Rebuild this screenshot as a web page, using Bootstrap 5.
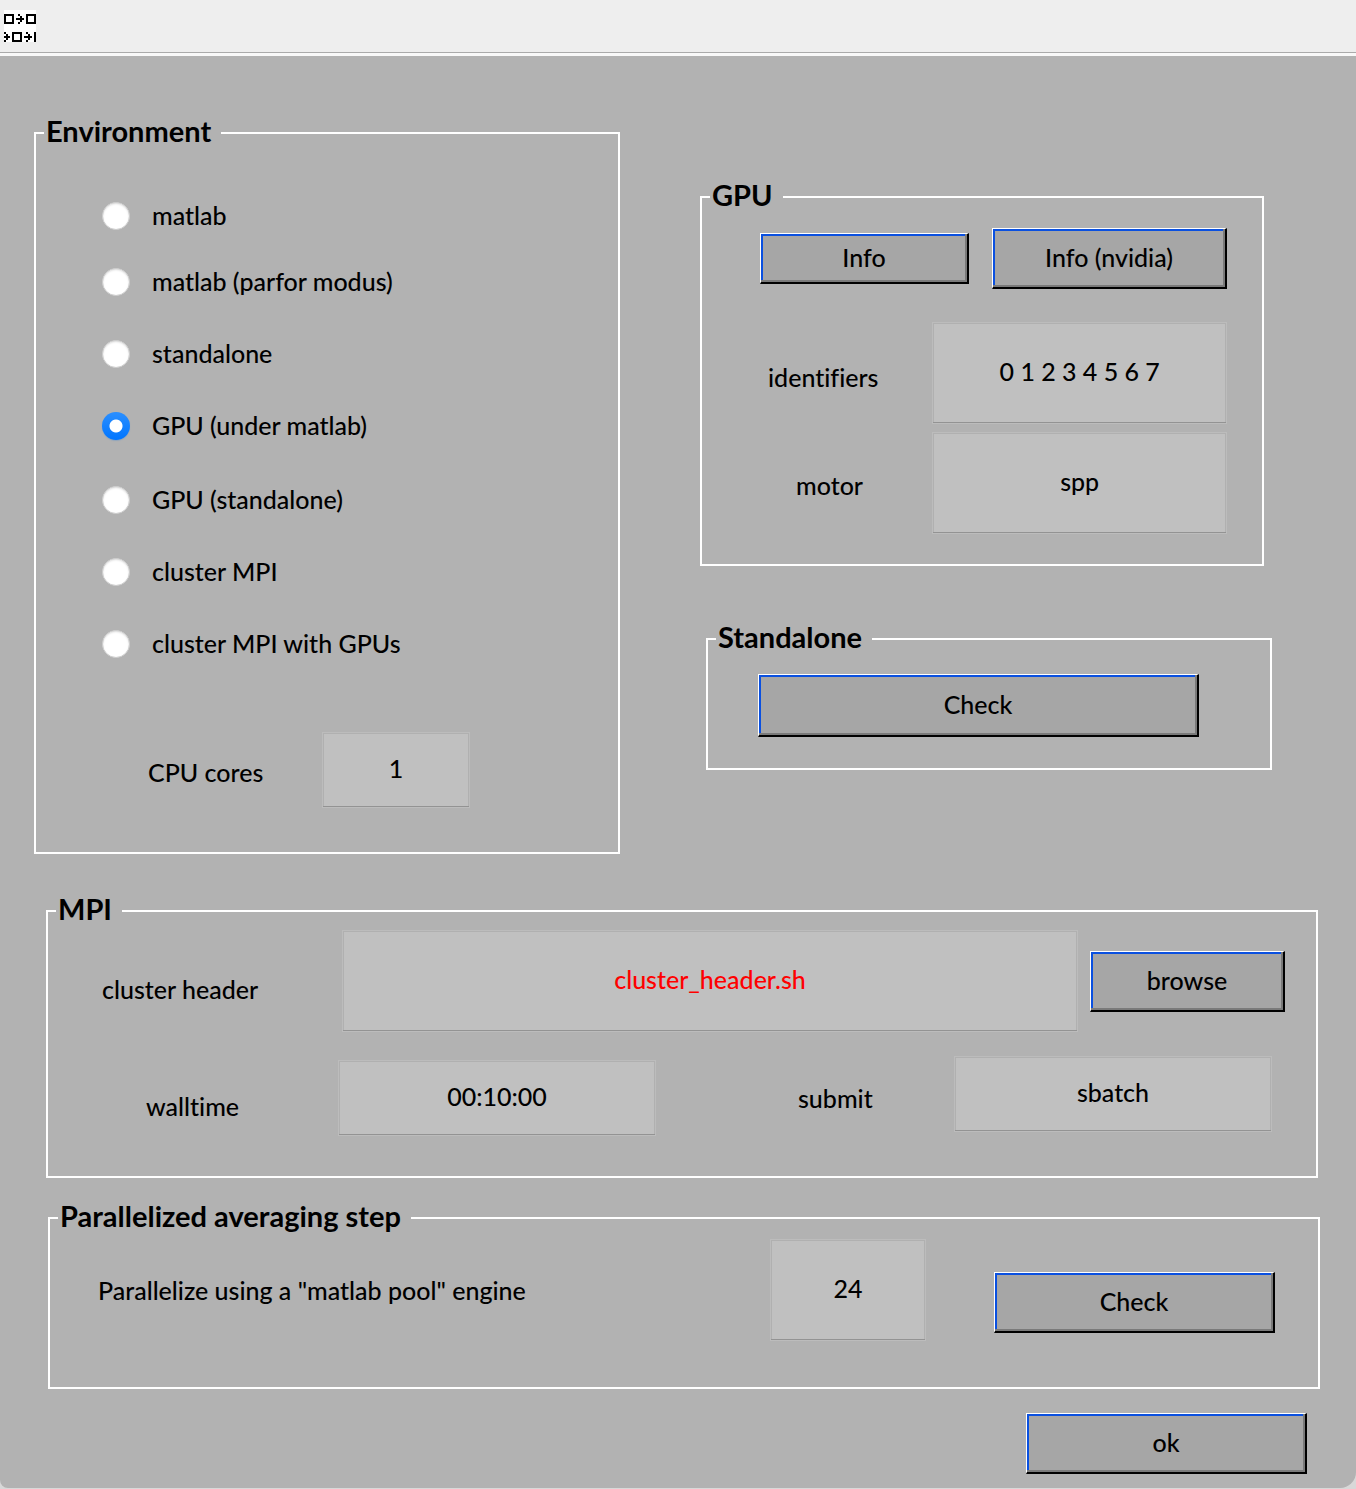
<!DOCTYPE html>
<html lang="en">
<head>
<meta charset="utf-8">
<meta name="viewport" content="width=device-width, initial-scale=1">
<title>Computing environment</title>
<link href="https://cdn.jsdelivr.net/npm/bootstrap@5.3.0/dist/css/bootstrap.min.css" rel="stylesheet">
<style>
body{background:#d8d8d8;color:#000;font-family:Lato,"Open Sans",sans-serif;font-size:25px;font-weight:500;line-height:36px;font-variant-ligatures:none}
input,button{font-weight:500;font-variant-ligatures:none}
.tool-strip{background:#eee;height:56px;padding:10px 4px 0;border-bottom:3px solid #f8f8f8;box-shadow:inset 0 -1px 0 #aaa}
.tool-strip svg{display:block}
.tool-strip a{display:inline-block}
.panel-body{background:#b2b2b2;border-radius:0 0 16px 8px;padding:59px 36px 14px 34px}
fieldset{border:2px solid #fff}
legend{float:none;width:auto;margin:0 0 0 8px;padding:0 10px 4px 2px;font-size:29px;line-height:32px;font-weight:700}
.top-grid{display:grid;grid-template-columns:586fr 572fr;column-gap:80px;padding-right:48px}
.env-inner{padding:35px 66px 44px}
.env-row{display:flex;align-items:center;height:72px;gap:22px}
.env-local .env-row:first-child{height:60px}
.env-remote{margin-top:2px}
.env-row label{padding-bottom:2px}
.env-radio{appearance:none;width:28px;height:28px;border-radius:50%;background:#fff;border:1px solid #ccc;margin:0;flex:none;box-shadow:inset 0 1px 2px #ddd}
.env-radio:checked{border:0;background:radial-gradient(circle,#fff 6px,transparent 7px),linear-gradient(#2b8fff,#0075ff);box-shadow:0 1px 1px #8fa5bd}
.entry{appearance:none;display:block;width:100%;min-width:0;height:102px;padding:0 2px 4px;border:1px solid #bcbcbc;border-radius:0;background:#c0c0c0;color:#000;text-align:center;box-shadow:inset 0 -1px 0 #939393,inset 0 0 0 1px #b0b0b0;outline:0}
.entry-short{height:76px}
.entry-alert{color:#f00}
.push{display:block;width:100%;height:61px;padding:0 0 2px;border:solid;border-width:1px 2px 2px 1px;border-color:#fff #000 #000 #fff;border-radius:0;background:#a6a6a6;color:#000;text-align:center;box-shadow:inset -2px -2px 0 #7a7a7a,inset 2px 2px 0 #0a50e0}
.push-small{height:51px}
.push-tall{height:63px}
.cores-grid{display:grid;grid-template-columns:174fr 148fr 82fr;padding-left:46px;margin-top:52px}
.right-col{padding-top:64px}
.gpu-box{margin-right:8px}
.gpu-inner{padding:13px 35px 30px 58px}
.gpu-buttons{display:grid;grid-template-columns:209fr 235fr;column-gap:23px;align-items:center;margin-bottom:33px}
.gpu-grid{display:grid;grid-template-columns:172fr 294fr;row-gap:8px;align-items:center}
.gpu-grid label:last-of-type{padding-left:36px}
.gpu-grid label:first-of-type{padding-left:8px}
.alone-box{margin:55px 0 0 6px}
.alone-inner{padding:17px 71px 31px 50px}
.mpi-box{margin:39px 2px 0 12px}
.mpi-inner{padding:1px 31px 40px 54px}
.header-grid{display:grid;grid-template-columns:240fr 736fr 207fr;align-items:center}
.browse-cell{padding-left:12px}
.time-grid{display:grid;grid-template-columns:236fr 318fr 142fr 156fr 318fr;margin:24px 13px 0 0}
.wall-label{padding:32px 0 0 44px}
.avg-box{margin:22px 0 0 14px}
.avg-inner{padding:3px 43px 46px 48px}
.avg-grid{display:grid;grid-template-columns:672fr 156fr 68fr 281fr;align-items:center}
.confirm{width:281px;margin:24px 13px 0 auto}
</style>
<script src="https://cdn.jsdelivr.net/npm/bootstrap@5.3.0/dist/js/bootstrap.bundle.min.js"></script>
</head>
<body>
<header class="tool-strip">
<a href="#" aria-label="Workflow">
<svg width="32" height="32" viewBox="0 0 32 32" shape-rendering="crispEdges"><rect width="32" height="32" fill="#fff"/><g fill="none" stroke="#000" stroke-width="2"><rect x="1" y="5" width="8" height="8"/><rect x="23" y="5" width="8" height="8"/><rect x="9" y="23" width="8" height="8"/></g><path d="M12 8h8v2h-8zM14 4h2v2h-2zM16 6h2v6h-2zM14 12h2v2h-2zM0 26h6v2H0zM0 22h2v2H0zM2 24h2v6H2zM0 30h2v2H0zM20 26h8v2h-8zM22 22h2v2h-2zM24 24h2v6h-2zM22 30h2v2h-2zM30 22h2v10h-2z"/></svg>
</a>
</header>
<main class="panel-body">
<form>
<div class="top-grid">
<fieldset>
<legend>Environment</legend>
<div class="env-inner">
<div class="env-local">
<div class="env-row"><input class="env-radio" type="radio" name="env" id="e1"><label for="e1">matlab</label></div>
<div class="env-row"><input class="env-radio" type="radio" name="env" id="e2"><label for="e2">matlab (parfor modus)</label></div>
<div class="env-row"><input class="env-radio" type="radio" name="env" id="e3"><label for="e3">standalone</label></div>
<div class="env-row"><input class="env-radio" type="radio" name="env" id="e4" checked><label for="e4">GPU (under matlab)</label></div>
</div>
<div class="env-remote">
<div class="env-row"><input class="env-radio" type="radio" name="env" id="e5"><label for="e5">GPU (standalone)</label></div>
<div class="env-row"><input class="env-radio" type="radio" name="env" id="e6"><label for="e6">cluster MPI</label></div>
<div class="env-row"><input class="env-radio" type="radio" name="env" id="e7"><label for="e7">cluster MPI with GPUs</label></div>
</div>
<div class="cores-grid align-items-center"><label class="pt-1" for="cores">CPU cores</label><input class="entry entry-short" id="cores" type="text" value="1"></div>
</div>
</fieldset>
<div class="right-col">
<fieldset class="gpu-box">
<legend>GPU</legend>
<div class="gpu-inner">
<div class="gpu-buttons"><button class="push push-small" type="button">Info</button><button class="push" type="button">Info (nvidia)</button></div>
<div class="gpu-grid">
<label class="pt-2" for="ids">identifiers</label><input class="entry" id="ids" type="text" value="0 1 2 3 4 5 6 7">
<label class="pt-1" for="motor">motor</label><input class="entry" id="motor" type="text" value="spp">
</div>
</div>
</fieldset>
<fieldset class="alone-box">
<legend>Standalone</legend>
<div class="alone-inner"><button class="push push-tall" type="button">Check</button></div>
</fieldset>
</div>
</div>
<fieldset class="mpi-box">
<legend>MPI</legend>
<div class="mpi-inner">
<div class="header-grid">
<label class="pt-3" for="chead">cluster header</label><input class="entry entry-alert" id="chead" type="text" value="cluster_header.sh">
<div class="browse-cell"><button class="push" type="button">browse</button></div>
</div>
<div class="time-grid">
<label class="wall-label" for="wall">walltime</label><div class="pt-1"><input class="entry entry-short" id="wall" type="text" value="00:10:00"></div>
<span></span><label class="pt-4" for="submit">submit</label><input class="entry entry-short" id="submit" type="text" value="sbatch">
</div>
</div>
</fieldset>
<fieldset class="avg-box">
<legend>Parallelized averaging step</legend>
<div class="avg-inner">
<div class="avg-grid">
<label for="pool">Parallelize using a "matlab pool" engine</label><input class="entry" id="pool" type="text" value="24">
<span></span><button class="push align-self-end mb-2" type="button">Check</button>
</div>
</div>
</fieldset>
<button class="push confirm" type="submit">ok</button>
</form>
</main>
</body>
</html>
